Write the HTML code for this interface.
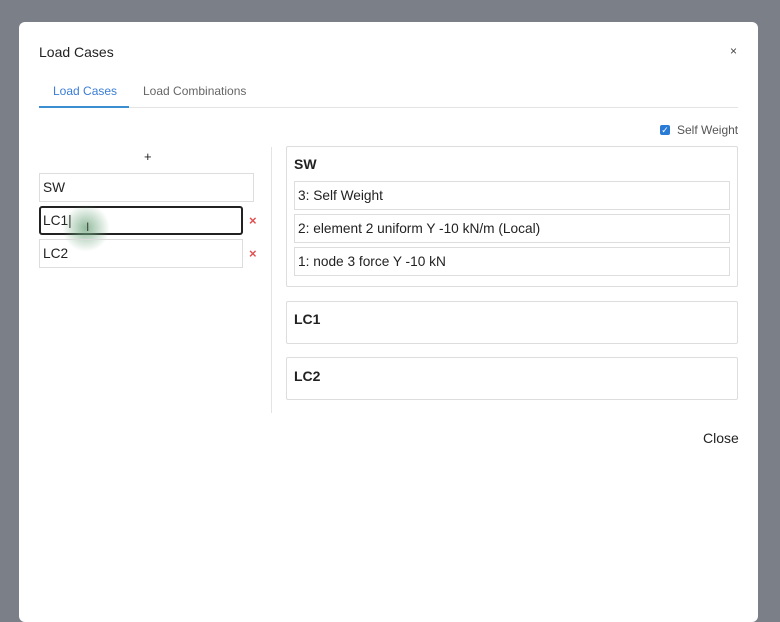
<!DOCTYPE html>
<html><head><style>
body{margin:0;width:780px;height:600px;background:#7b7f87;font-family:"Liberation Sans",sans-serif;position:relative;overflow:hidden;color:#222}
.m{position:absolute;left:19px;top:22px;width:739px;height:600px;background:#fff;border-radius:6px}
.a{position:absolute}
.in{position:absolute;border:1px solid #ddd;box-sizing:border-box;font-size:13.7px;padding-left:3px;display:flex;align-items:center}
.x{position:absolute;color:#e05050;font-size:13px;font-weight:bold}
.box{position:absolute;left:286px;width:452px;border:1px solid #ddd;box-sizing:border-box;border-radius:2px}
</style></head><body>
<div class="m"></div>
<div class="a" style="left:39px;top:44px;font-size:14px">Load Cases</div>
<div class="a" style="left:730px;top:44px;font-size:12px;color:#444">×</div>
<div class="a" style="left:53px;top:84px;font-size:12px;color:#3b7dd8">Load Cases</div>
<div class="a" style="left:143px;top:84px;font-size:12px;color:#666">Load Combinations</div>
<div class="a" style="left:39px;top:107px;width:699px;height:1px;background:#e4e4e4"></div>
<div class="a" style="left:39px;top:106px;width:90px;height:2px;background:#3b8fd0"></div>
<div class="a" style="left:660px;top:125px;width:10px;height:10px;background:#2a7bd6;border-radius:2px;color:#fff;font-size:9px;line-height:10px;text-align:center">✓</div>
<div class="a" style="left:677px;top:123px;font-size:12px;color:#555">Self Weight</div>
<div class="a" style="left:144px;top:149px;font-size:13px">+</div>
<div class="in" style="left:39px;top:173px;width:215px;height:29px">SW</div>
<div class="in" style="left:39px;top:206px;width:204px;height:29px;border:2px solid #222;border-radius:3px;padding-left:2px">LC1|</div>
<div class="a" style="left:62px;top:204px;width:48px;height:48px;border-radius:50%;background:radial-gradient(circle,rgba(110,165,125,.75),rgba(110,165,125,0) 70%)"></div>
<div class="a" style="left:86px;top:220px;font-size:12px;color:#444">I</div>
<div class="x" style="left:249px;top:213px">×</div>
<div class="in" style="left:39px;top:239px;width:204px;height:29px">LC2</div>
<div class="x" style="left:249px;top:246px">×</div>
<div class="a" style="left:271px;top:147px;width:1px;height:266px;background:#e4e4e4"></div>
<div class="box" style="top:146px;height:141px"></div>
<div class="a" style="left:294px;top:156px;font-size:14px;font-weight:bold">SW</div>
<div class="in" style="left:294px;top:181px;width:436px;height:29px">3: Self Weight</div>
<div class="in" style="left:294px;top:214px;width:436px;height:29px">2: element 2 uniform Y -10 kN/m (Local)</div>
<div class="in" style="left:294px;top:247px;width:436px;height:29px">1: node 3 force Y -10 kN</div>
<div class="box" style="top:301px;height:43px"></div>
<div class="a" style="left:294px;top:311px;font-size:14px;font-weight:bold">LC1</div>
<div class="box" style="top:357px;height:43px"></div>
<div class="a" style="left:294px;top:368px;font-size:14px;font-weight:bold">LC2</div>
<div class="a" style="left:703px;top:430px;font-size:14px">Close</div>
</body></html>
